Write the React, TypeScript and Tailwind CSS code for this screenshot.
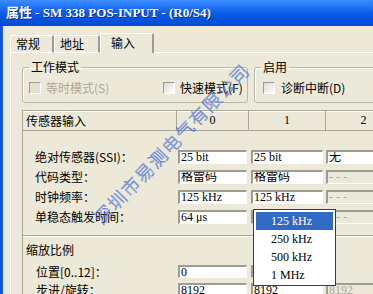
import React from "react";

const CJK = "font-['Noto_Sans_CJK_SC',sans-serif]";
const SERIF = "font-['Liberation_Serif','Noto_Sans_CJK_SC',serif]";

type Cell = { text: string; disabled?: boolean } | null;

const rows: { label: string; cells: Cell[] }[] = [
  { label: "绝对传感器(SSI)：", cells: [{ text: "25 bit" }, { text: "25 bit" }, { text: "无" }] },
  { label: "代码类型：", cells: [{ text: "格雷码" }, { text: "格雷码" }, { text: "- - -", disabled: true }] },
  { label: "时钟频率：", cells: [{ text: "125 kHz" }, { text: "125 kHz" }, { text: "- - -", disabled: true }] },
  { label: "单稳态触发时间：", cells: [{ text: "64 μs" }, { text: "64 μs" }, { text: "- - -", disabled: true }] },
];

// field offsets/widths per column, measured from the dialog
const fieldCols = [
  { ml: "ml-[2px]", w: "w-[69px]" },
  { ml: "ml-[4px]", w: "w-[72px]" },
  { ml: "ml-[3px]", w: "w-[70px]" },
];

const Field = ({ cell, col, h = "h-[14px]" }: { cell: Cell; col: number; h?: string }) => {
  const c = fieldCols[col];
  if (!cell) return <div className={`${c.ml} ${c.w} ${h} shrink-0`} />;
  return (
    <div
      className={`${c.ml} ${c.w} ${h} shrink-0 overflow-hidden border-t-2 border-l-2 border-b border-r border-t-[#9c9b94] border-l-[#9c9b94] border-b-white border-r-white pl-[1px] text-[12px] leading-[11px] whitespace-nowrap ${SERIF} ${
        cell.disabled ? "bg-[#ece9d8] text-[#aca899]" : "bg-white text-black"
      }`}
    >
      {cell.text}
    </div>
  );
};

const Checkbox = ({ disabled }: { disabled?: boolean }) => (
  <span
    className={`inline-block w-[12px] h-[12px] shrink-0 border-t border-l border-t-[#9c9b94] border-l-[#9c9b94] border-b border-r border-b-white border-r-white ${
      disabled ? "bg-[#e4e1d3]" : "bg-gradient-to-br from-[#dcdad0] to-white"
    }`}
  />
);

const Tab = ({ label, selected, w }: { label: string; selected?: boolean; w: string }) => (
  <div
    className={`${w} shrink-0 rounded-t-[2px] border-t border-l border-white border-r-2 border-r-[#9d9c95] text-[12px] ${CJK} flex justify-start ${
      selected ? "h-[20px] pl-[10px] pt-[1px] bg-[#ece9d8]" : "h-[18px] pl-[5px] border-b border-b-white"
    }`}
  >
    <span className="leading-[16px]">{label}</span>
  </div>
);

export default function App() {
  return (
    <div className="relative w-[373px] h-[294px] overflow-hidden bg-[#ece9d8] text-black">
      {/* title bar */}
      <div className="h-[26px] flex items-center pl-[6px] bg-gradient-to-b from-[#3b8cff] via-[#0a5de9] to-[#0049d4]">
        <span className={`text-white text-[13px] font-bold leading-[16px] whitespace-nowrap ${SERIF} [text-shadow:1px_1px_0_#0a2a8a]`}>
          属性 - SM 338 POS-INPUT - (R0/S4)
        </span>
      </div>

      <div className="flex h-[268px]">
        <div className="w-[3px] shrink-0 bg-gradient-to-r from-[#0a47d0] to-[#1a66ee]" />
        <div className="flex-1 min-w-0 overflow-hidden">
          {/* tabs */}
          <div className="mt-[7px] pl-[7px] flex items-end h-[20px]">
            <Tab label="常规" w="w-[44px]" />
            <Tab label="地址" w="w-[46px]" />
            <Tab label="输入" w="w-[54px]" selected />
            <div className="flex-1 border-b border-white" />
          </div>

          {/* tab panel */}
          <div className="ml-[7px] border-l border-white pl-[11px] h-[241px]">
            <div className="flex gap-[6px] w-[400px]">
              <fieldset className="mt-[7px] w-[226px] shrink-0 border border-[#bab8ab] rounded-[3px] shadow-[inset_1px_1px_0_#fff] px-0 pb-[4px]">
                <legend className={`ml-[6px] px-[2px] text-[12px] leading-[14px] ${CJK}`}>工作模式</legend>
                <div className={`mt-[4px] h-[20px] flex items-center text-[12px] ${CJK}`}>
                  <div className="w-[140px] pl-[6px] flex items-center gap-[5px] shrink-0">
                    <Checkbox disabled />
                    <span className="text-[#aca899] leading-[14px]">等时模式(S)</span>
                  </div>
                  <div className="flex items-center gap-[5px]">
                    <Checkbox />
                    <span className="leading-[14px]">快速模式(F)</span>
                  </div>
                </div>
              </fieldset>
              <fieldset className="mt-[7px] w-[160px] shrink-0 border border-[#bab8ab] rounded-[3px] shadow-[inset_1px_1px_0_#fff] px-0 pb-[4px]">
                <legend className={`ml-[6px] px-[2px] text-[12px] leading-[14px] ${CJK}`}>启用</legend>
                <div className={`mt-[4px] h-[20px] flex items-center text-[12px] ${CJK}`}>
                  <div className="pl-[8px] flex items-center gap-[6px]">
                    <Checkbox />
                    <span className="leading-[14px]">诊断中断(D)</span>
                  </div>
                </div>
              </fieldset>
            </div>

            {/* sensor table */}
            <div className="mt-[7px] border-l border-[#a7a69a] w-[420px] h-[200px]">
              <div className="flex h-[21px] border-t border-b border-[#a7a69a] text-[12px] leading-[19px] shadow-[inset_0_1px_0_#fff]">
                <div className={`w-[154px] shrink-0 border-r border-[#a7a69a] pl-[3px] ${CJK}`}>传感器输入</div>
                <div className={`w-[72px] shrink-0 border-r border-[#a7a69a] text-center ${SERIF}`}>0</div>
                <div className={`w-[77px] shrink-0 border-r border-[#a7a69a] text-center ${SERIF}`}>1</div>
                <div className={`w-[75px] shrink-0 text-center ${SERIF}`}>2</div>
              </div>

              <div className="pt-[19px]">
                {rows.map((r) => (
                  <div key={r.label} className="flex h-[20px] items-start">
                    <div className={`w-[153px] shrink-0 pl-[12px] text-[12px] leading-[14px] whitespace-nowrap ${CJK}`}>{r.label}</div>
                    {r.cells.map((c, i) => (
                      <Field key={i} cell={c} col={i} />
                    ))}
                  </div>
                ))}
              </div>

              <div className="mt-[5px] h-[2px] border-t border-[#a7a69a] border-b border-b-white" />

              <div className={`mt-[6px] pl-[3px] text-[12px] leading-[14px] ${CJK}`}>缩放比例</div>
              <div className="mt-[8px] flex h-[18px] items-start">
                <div className={`w-[153px] shrink-0 pl-[13px] text-[12px] leading-[13px] ${CJK}`}>位置[0..12]：</div>
                <Field cell={{ text: "0" }} col={0} h="h-[13px]" />
                <Field cell={{ text: "0" }} col={1} h="h-[13px]" />
                <Field cell={null} col={2} h="h-[13px]" />
              </div>
              <div className="flex h-[18px] items-start">
                <div className={`w-[153px] shrink-0 pl-[13px] text-[12px] leading-[13px] ${CJK}`}>步进/旋转：</div>
                <Field cell={{ text: "8192" }} col={0} h="h-[13px]" />
                <Field cell={{ text: "8192" }} col={1} h="h-[13px]" />
                <Field cell={{ text: "8192", disabled: true }} col={2} h="h-[13px]" />
              </div>
            </div>
          </div>
        </div>
      </div>

      {/* open clock-frequency list */}
      <div className={`absolute left-[253px] top-[209px] w-[83px] h-[77px] bg-white border border-[#3c3c3c] p-[2px] text-[12px] ${SERIF}`}>
        {["125 kHz", "250 kHz", "500 kHz", "1 MHz"].map((t, i) => (
          <div
            key={t}
            className={`h-[18px] leading-[18px] pl-[15px] whitespace-nowrap ${i === 0 ? "bg-[#316ac5] text-white" : "text-black"}`}
          >
            {t}
          </div>
        ))}
      </div>

      {/* watermark */}
      <div
        className={`pointer-events-none absolute left-[171px] top-[143px] -translate-x-1/2 -translate-y-1/2 -rotate-[46deg] whitespace-nowrap text-[18px] leading-[20px] tracking-[1.5px] font-light text-transparent [-webkit-text-stroke:0.5px_#4a6fd6] ${CJK}`}
      >
        深圳市易测电气有限公司
      </div>
    </div>
  );
}
